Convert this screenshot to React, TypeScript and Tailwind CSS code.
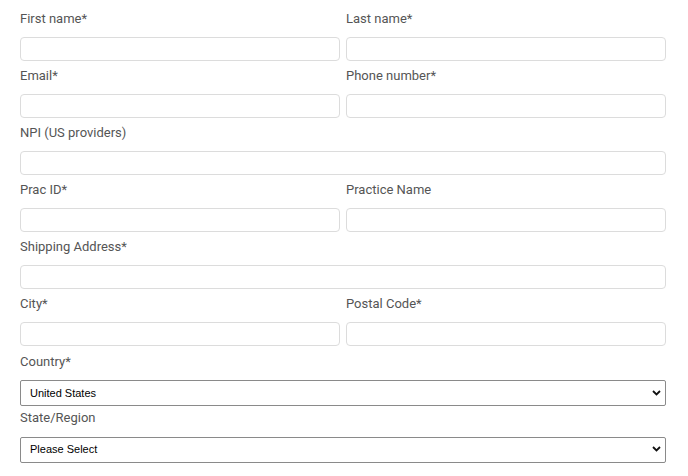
import React from "react";

type Field = { label: string; full?: boolean };

const rows: Field[][] = [
  [{ label: "First name*" }, { label: "Last name*" }],
  [{ label: "Email*" }, { label: "Phone number*" }],
  [{ label: "NPI (US providers)", full: true }],
  [{ label: "Prac ID*" }, { label: "Practice Name" }],
  [{ label: "Shipping Address*", full: true }],
  [{ label: "City*" }, { label: "Postal Code*" }],
];

const TextField: React.FC<{ label: string }> = ({ label }) => (
  <div className="flex-1 flex flex-col">
    <label className="h-5 leading-5 text-[13px] text-[#555] mb-2">{label}</label>
    <input
      type="text"
      className="h-6 w-full rounded-[4px] border border-[#dcdcdc] bg-white px-2 text-sm outline-none"
    />
  </div>
);

const SelectField: React.FC<{ label: string; value: string; options: string[] }> = ({
  label,
  value,
  options,
}) => (
  <div className="flex flex-col">
    <label className="h-5 leading-5 text-[13px] text-[#555] mb-2">{label}</label>
    <div className="relative">
      <select
        defaultValue={value}
        className="h-[26px] w-full appearance-none rounded-[2px] border border-[#8a8a8a] bg-white pl-[9px] pr-6 text-[11px] text-black font-['Liberation_Sans',Arial,sans-serif] outline-none"
      >
        {options.map((o) => (
          <option key={o}>{o}</option>
        ))}
      </select>
      <svg
        className="pointer-events-none absolute right-[5px] top-1/2 -translate-y-1/2"
        width="9"
        height="6"
        viewBox="0 0 9 6"
      >
        <path d="M1 1l3.5 3.5L8 1" fill="none" stroke="#111" strokeWidth="1.8" />
      </svg>
    </div>
  </div>
);

export default function App() {
  return (
    <div className="w-[688px] h-[476px] bg-white px-5 pt-[9px] font-['Roboto',sans-serif]">
      <div className="w-[646px] flex flex-col gap-[5px]">
        {rows.map((row, i) => (
          <div key={i} className="flex gap-[6px]">
            {row.map((f) => (
              <TextField key={f.label} label={f.label} />
            ))}
          </div>
        ))}
        <div className="pt-px">
          <SelectField label="Country*" value="United States" options={["United States", "Canada"]} />
        </div>
        <div className="-mt-[3px]">
          <SelectField label="State/Region" value="Please Select" options={["Please Select"]} />
        </div>
      </div>
    </div>
  );
}
